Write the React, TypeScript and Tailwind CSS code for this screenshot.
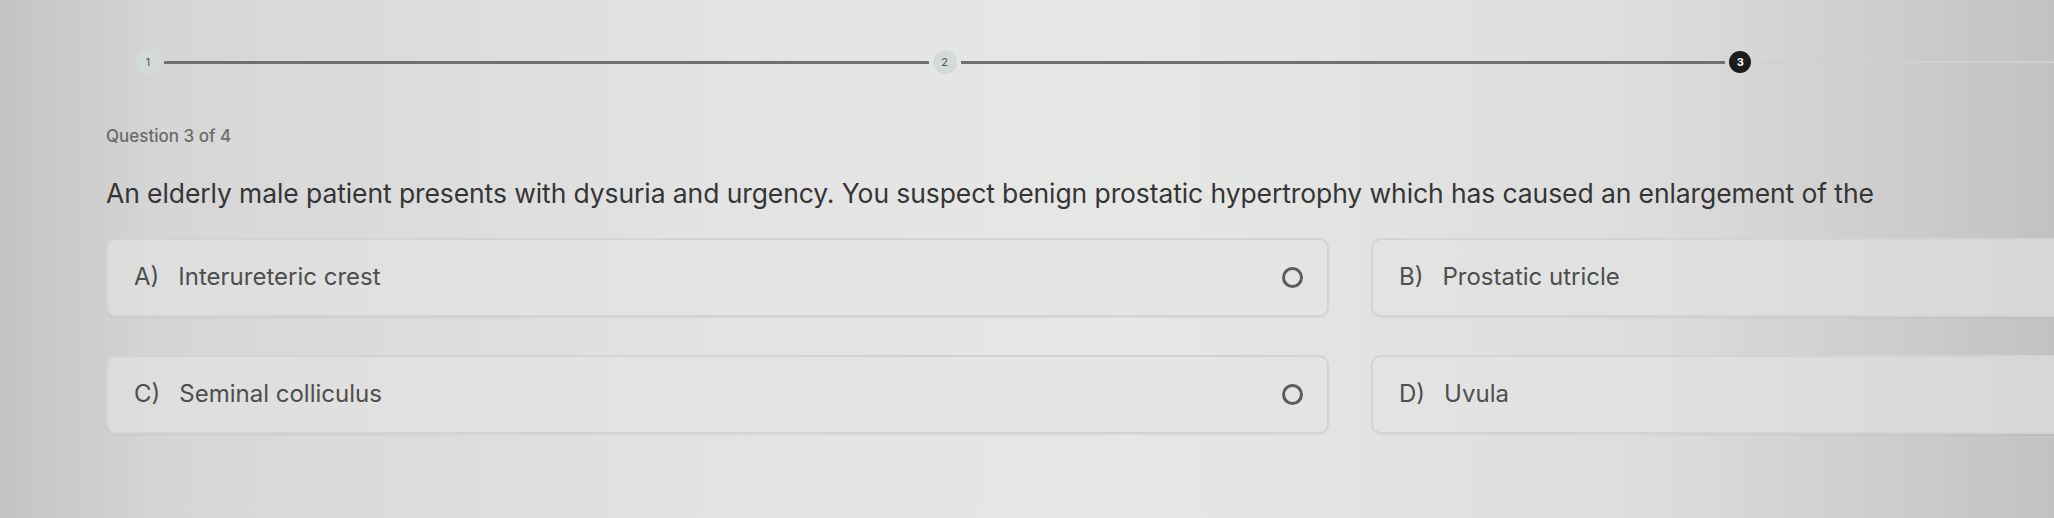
import React from "react";

const options = [
  { key: "A", text: "Interureteric crest" },
  { key: "B", text: "Prostatic utricle" },
  { key: "C", text: "Seminal colliculus" },
  { key: "D", text: "Uvula" },
];

function Step({ n, state }: { n: number; state: "done" | "active" | "todo" }) {
  if (state === "active") {
    return (
      <div className="w-[22px] h-[22px] rounded-full bg-[#1c1c1c] flex items-center justify-center text-[11px] font-bold text-white shrink-0">
        {n}
      </div>
    );
  }
  if (state === "todo") {
    // sits past the right edge of the window
    return <div className="w-[24px] h-[24px] rounded-full bg-[#d6d8d6] shrink-0" />;
  }
  return (
    <div className="w-[24px] h-[24px] rounded-full bg-[#d3dbd7] flex items-center justify-center text-[11px] text-[#4f5552] shrink-0">
      {n}
    </div>
  );
}

export default function App() {
  return (
    <div
      className="w-[2054px] h-[518px] overflow-hidden bg-[linear-gradient(90deg,#c3c3c3_0%,#d6d6d6_8%,#e2e3e2_35%,#e6e8e6_55%,#dcdddc_80%,#c2c2c2_100%)]"
      style={{ fontFamily: "Inter, 'Open Sans', sans-serif" }}
    >
      <div className="w-[2600px] pl-[106px] pt-[50px]">
        {/* progress steps */}
        <div className="flex items-center pl-[30px] pr-[52px]">
          <Step n={1} state="done" />
          <div className="flex-1 h-[3px] bg-[#6f7170] mx-[4px]" />
          <Step n={2} state="done" />
          <div className="flex-1 h-[3px] bg-[#6f7170] mx-[4px]" />
          <Step n={3} state="active" />
          <div className="flex-1 h-[2px] bg-[#cfd1cf] mx-[4px]" />
          <Step n={4} state="todo" />
        </div>

        <div className="mt-[50px] text-[17px] font-medium text-[#6a6b6a]">Question 3 of 4</div>
        <p className="mt-[26px] text-[26.5px] leading-[34px] text-[#353535] tracking-[-0.1px]">
          An elderly male patient presents with dysuria and urgency. You suspect benign prostatic hypertrophy which has caused an enlargement of the
        </p>

        <div className="mt-[28px] grid grid-cols-2 gap-x-[42px] gap-y-[38px] w-[2488px]">
          {options.map((o) => (
            <div
              key={o.key}
              className="h-[79px] rounded-[10px] border-2 border-[#d2d3d2] bg-[#e3e4e3]/60 shadow-[0_1px_2px_rgba(0,0,0,0.06)] flex items-center justify-between pl-[26px] pr-[24px]"
            >
              <div className="flex items-center gap-[19px] text-[24px] text-[#4d4e4d]">
                <span>{o.key})</span>
                <span>{o.text}</span>
              </div>
              <div className="w-[21px] h-[21px] rounded-full border-[3px] border-[#5b5c5b]" />
            </div>
          ))}
        </div>
      </div>
    </div>
  );
}
